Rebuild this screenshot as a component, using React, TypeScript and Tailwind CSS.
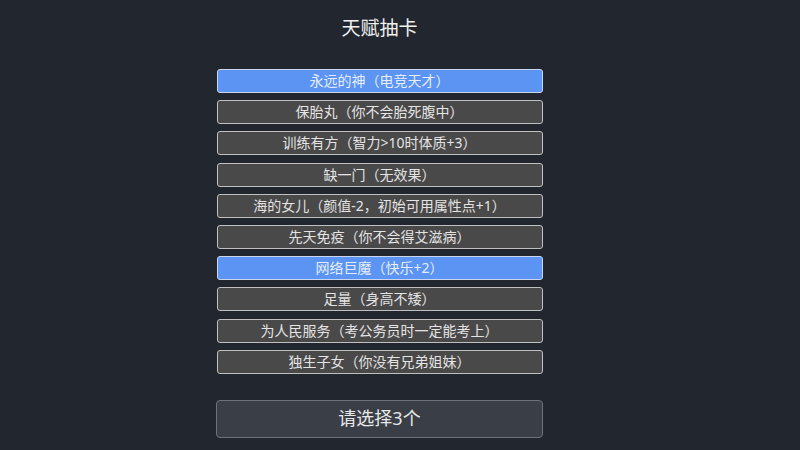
import React from 'react';

const TALENTS = [
  { name: '永远的神（电竞天才）', picked: true },
  { name: '保胎丸（你不会胎死腹中）', picked: false },
  { name: '训练有方（智力>10时体质+3）', picked: false },
  { name: '缺一门（无效果）', picked: false },
  { name: '海的女儿（颜值-2，初始可用属性点+1）', picked: false },
  { name: '先天免疫（你不会得艾滋病）', picked: false },
  { name: '网络巨魔（快乐+2）', picked: true },
  { name: '足量（身高不矮）', picked: false },
  { name: '为人民服务（考公务员时一定能考上）', picked: false },
  { name: '独生子女（你没有兄弟姐妹）', picked: false },
];

export default function App() {
  return (
    <div
      className="w-[800px] h-[450px] bg-[#22272f] overflow-hidden"
      style={{ fontFamily: '"Noto Sans", "Noto Sans CJK SC", sans-serif' }}
    >
      <div className="w-[759px] flex flex-col items-center">
        {/* Title */}
        <h1 className="mt-[13px] h-[30px] leading-[30px] text-[19px] text-[#f0f0f0]">天赋抽卡</h1>

        {/* Talent list */}
        <div className="mt-[26px] w-[326px] flex flex-col gap-[7.2px]">
          {TALENTS.map((t) => (
            <div
              key={t.name}
              className={`h-6 flex items-center justify-center rounded-[3px] border-[1.5px] text-sm leading-none
                ${t.picked
                  ? 'bg-[#5b94f2] border-[#c9d6f0] text-[#e6eefc]'
                  : 'bg-[#4a4949] border-[#c0c0c0] text-[#e4e4e4]'
                }`}
            >
              {t.name}
            </div>
          ))}
        </div>

        {/* Confirm */}
        <button className="mt-[26px] w-[327px] h-[38px] rounded-[4px] border-[1.5px] border-[#6d727b] bg-[#3a3f47] text-[18px] text-[#e8e8e8]">
          请选择3个
        </button>
      </div>
    </div>
  );
}
